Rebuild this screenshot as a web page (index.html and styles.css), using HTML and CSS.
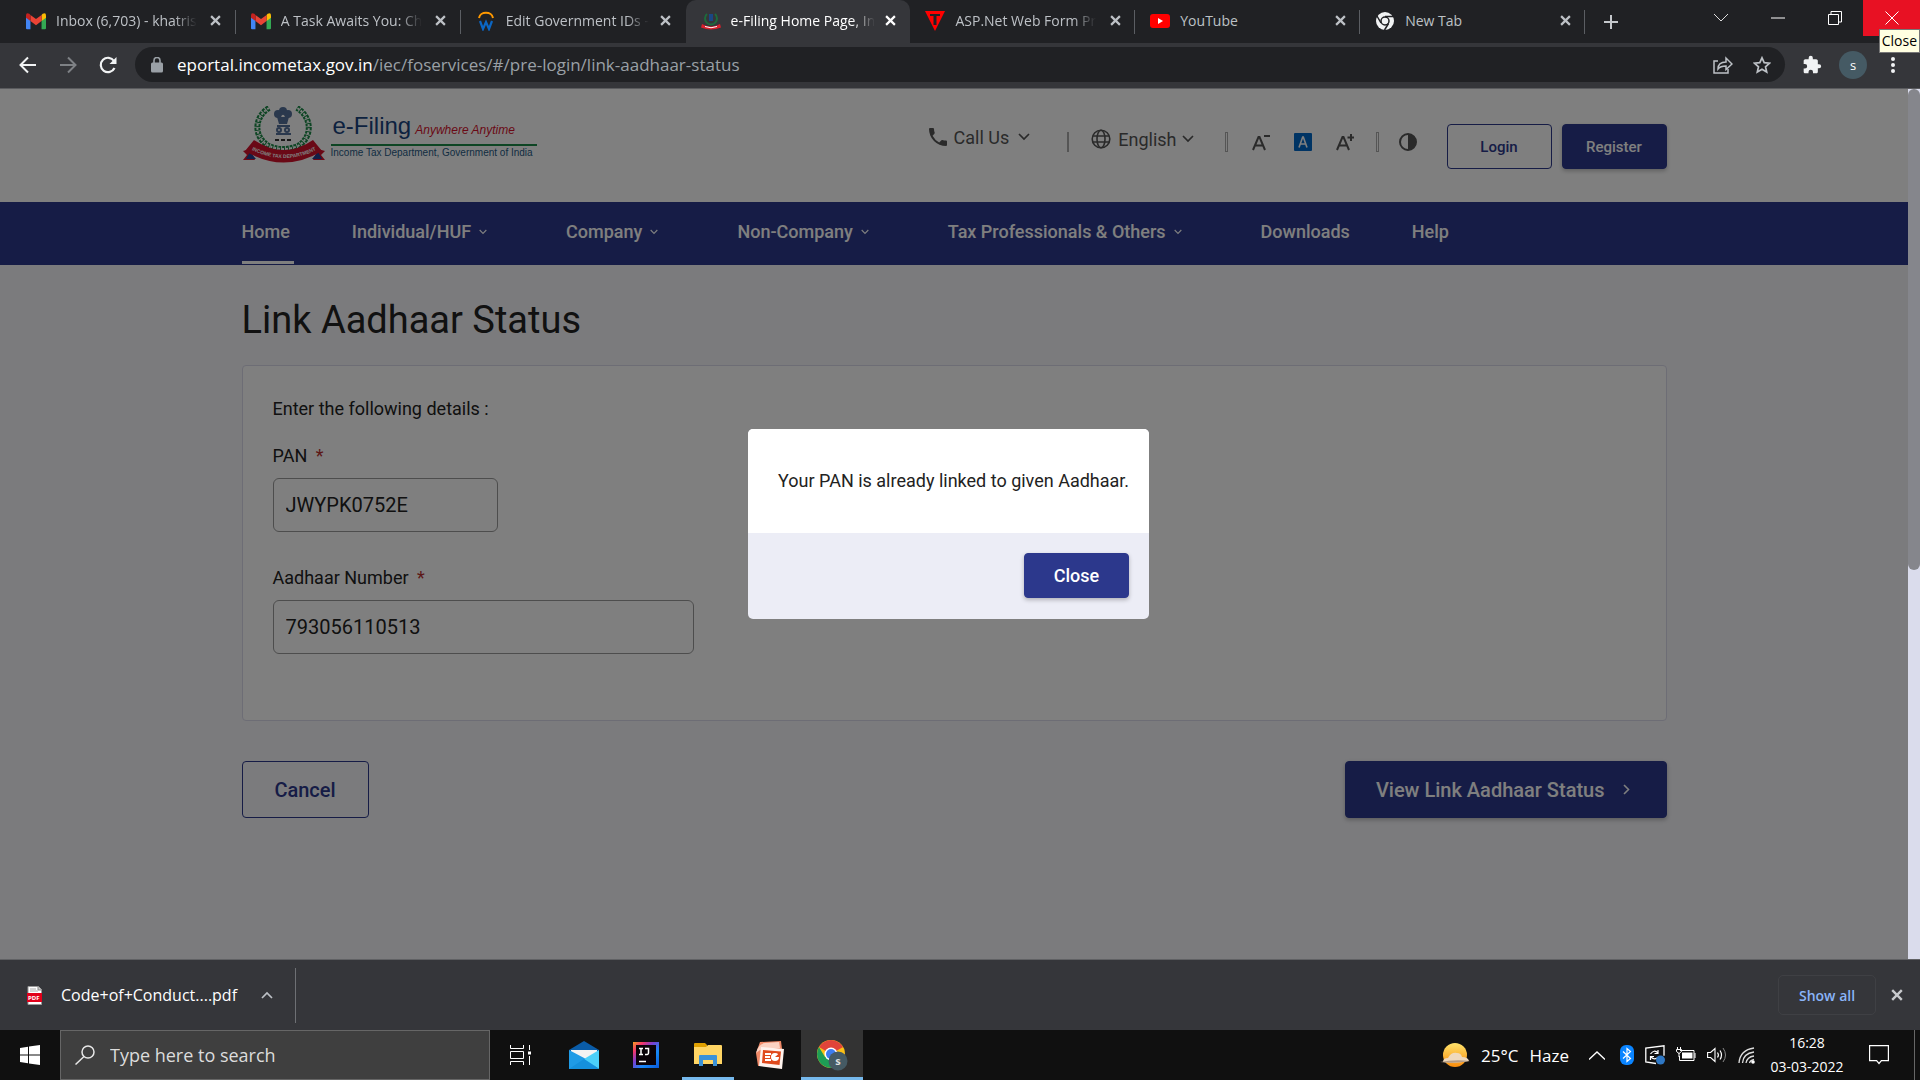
FILE: index.html
```html
<!DOCTYPE html>
<html lang="en">
<head>
<meta charset="utf-8">
<title>e-Filing Home Page, Income Tax Department</title>
<link rel="stylesheet" href="styles.css">
</head>
<body>
<svg class="defs" width="0" height="0" aria-hidden="true">
  <symbol id="x" viewBox="0 0 10 10"><path d="M1 1l8 8M9 1l-8 8" fill="none" stroke="currentColor" stroke-width="2"/></symbol>
  <symbol id="down" viewBox="0 0 12 8"><path d="M1 1l5 5 5-5" fill="none" stroke="currentColor" stroke-width="1.700"/></symbol>
  <symbol id="gmail" viewBox="0 0 18 18"><path d="M0 4v11.500q0 1 1 1h3V8.500z" fill="#4285f4"/><path d="M14 8.500v8h3q1 0 1-1V4z" fill="#34a853"/><path d="M14 3.500v5.500l4-3V4q0-3-3-1.500z" fill="#fbbc04"/><path d="M4 3.500L9 7.300l5-3.800V9l-5 3.800L4 9z" fill="#ea4335"/><path d="M0 4q0-3 3-1.500l1 1V9L0 6z" fill="#c5221f"/></symbol>
</svg>

<header class="browser">
  <div class="tabstrip">
    <div class="tabs">
      <div class="tab"><svg class="fav"><use href="#gmail"/></svg><span class="tab-title"><span>Inbox (6,703) - khatris</span></span><button class="tab-x" aria-label="Close tab"><svg><use href="#x"/></svg></button></div>
      <div class="tab"><svg class="fav"><use href="#gmail"/></svg><span class="tab-title"><span>A Task Awaits You: Ch</span></span><button class="tab-x" aria-label="Close tab"><svg><use href="#x"/></svg></button></div>
      <div class="tab no-line"><svg class="fav" viewBox="0 0 18 20"><path d="M2 7C3 0 15 0 16 7" fill="none" stroke="#f90" stroke-width="2"/><path d="M3 10l3 8 3-7 3 7 3-8" fill="none" stroke="#0b66c3" stroke-width="2.200"/></svg><span class="tab-title"><span>Edit Government IDs -</span></span><button class="tab-x" aria-label="Close tab"><svg><use href="#x"/></svg></button></div>
      <div class="tab active no-line"><svg class="fav" viewBox="0 0 20 18"><path d="M6 2a6 6 0 1 0 8 0" fill="none" stroke="#1d6b3c" stroke-width="2"/><path d="M10 2v7" stroke="#1a4784" stroke-width="4"/><path d="M1 12q9 5 18 0l1 3.500q-10 4-20 0z" fill="#d8202c"/><path d="M4 14.500q6 2.500 12 0" fill="none" stroke="#fff"/></svg><span class="tab-title"><span>e-Filing Home Page, In</span></span><button class="tab-x" aria-label="Close tab"><svg><use href="#x"/></svg></button></div>
      <div class="tab"><svg class="fav" viewBox="0 0 20 20"><path d="M0 0h20L10 20z" fill="#f00"/><path d="M5 3h10v2h-3.500v9h-3V5H5z" fill="#202124"/></svg><span class="tab-title"><span>ASP.Net Web Form Pr</span></span><button class="tab-x" aria-label="Close tab"><svg><use href="#x"/></svg></button></div>
      <div class="tab"><svg class="fav" viewBox="0 0 20 20"><rect y="3" width="20" height="14" rx="3" fill="#f00"/><path d="M8 7l5 3-5 3z" fill="#fff"/></svg><span class="tab-title">YouTube</span><button class="tab-x" aria-label="Close tab"><svg><use href="#x"/></svg></button></div>
      <div class="tab"><svg class="fav" viewBox="0 0 20 20"><circle cx="10" cy="10" r="9" fill="#f1f3f4"/><circle cx="10" cy="10" r="4" fill="#f1f3f4" stroke="#202124" stroke-width="1.500"/><path d="M10 5.500h8.500M6 12L2 5M13.500 12.500L9.500 19" stroke="#202124" stroke-width="1.500"/></svg><span class="tab-title">New Tab</span><button class="tab-x" aria-label="Close tab"><svg><use href="#x"/></svg></button></div>
    </div>
    <button class="new-tab" aria-label="New tab"><svg width="16" height="16" viewBox="0 0 16 16"><path d="M8 1v14M1 8h14" stroke="#c5c8cc" stroke-width="2"/></svg></button>
    <div class="win-controls">
      <button aria-label="Search tabs"><svg width="14" height="8" viewBox="0 0 14 8"><path d="M0 0l7 7 7-7" fill="none" stroke="#ddd"/></svg></button>
      <button aria-label="Minimize"><svg width="14" height="2"><path d="M0 1h14" stroke="#fff"/></svg></button>
      <button aria-label="Restore"><svg width="14" height="14" viewBox="0 0 14 14"><path d="M.5 3.500h10v10H.5zM3 3V.5h10.500V11H11" fill="none" stroke="#fff"/></svg></button>
      <button class="win-close" aria-label="Close window"><svg width="14" height="14" viewBox="0 0 14 14"><path d="M.5.5l13 13M13.500.5l-13 13" stroke="#fff"/></svg></button>
    </div>
    <div class="tooltip">Close</div>
  </div>
  <div class="toolbar">
    <button class="tool" aria-label="Back"><svg width="18" height="18" viewBox="0 0 18 18"><path d="M17 9H2M9 1.500L1.500 9 9 16.500" fill="none" stroke="#f1f3f4" stroke-width="2"/></svg></button>
    <button class="tool" aria-label="Forward"><svg width="18" height="18" viewBox="0 0 18 18"><path d="M1 9h15M9 1.500L16.500 9 9 16.500" fill="none" stroke="#7e8185" stroke-width="2"/></svg></button>
    <button class="tool" aria-label="Reload"><svg width="18" height="18" viewBox="0 0 18 18"><path d="M15.500 12A7.200 7.200 0 1 1 15 5" fill="none" stroke="#f1f3f4" stroke-width="2.200"/><path d="M17.500 1v7h-7z" fill="#f1f3f4"/></svg></button>
    <div class="omnibox">
      <svg width="12" height="16" viewBox="0 0 12 16"><rect y="5.500" width="12" height="10" rx="1.500" fill="#9aa0a6"/><path d="M3 6V3.500a3 3 0 0 1 6 0V6" fill="none" stroke="#9aa0a6" stroke-width="1.600"/></svg>
      <div class="url"><b>eportal.incometax.gov.in</b>/iec/foservices/#/pre-login/link-aadhaar-status</div>
      <svg width="20" height="18" viewBox="0 0 20 18"><path d="M5 5H1v12h14v-4" fill="none" stroke="#bdc1c6" stroke-width="1.500"/><path d="M5 13c0-5 3-7 8-7V2l6 6-6 5.500V10c-4 0-6 .5-8 3z" fill="none" stroke="#bdc1c6" stroke-width="1.500"/></svg>
      <svg class="star" width="18" height="18" viewBox="0 0 18 18"><path d="M9 1.800l2.200 4.900 5.300.5-4 3.600 1.200 5.300L9 13.300l-4.700 2.800 1.200-5.300-4-3.600 5.300-.5z" fill="none" stroke="#bdc1c6" stroke-width="1.700"/></svg>
    </div>
    <button class="tool ext" aria-label="Extensions"><svg width="20" height="20" viewBox="0 0 24 24"><path d="M20.500 11H19V7c0-1.100-.9-2-2-2h-4V3.500a2.500 2.500 0 0 0-5 0V5H4c-1.100 0-2 .9-2 2v3.800h1.500a2.700 2.700 0 0 1 0 5.400H2V20c0 1.100.9 2 2 2h3.800v-1.500a2.700 2.700 0 0 1 5.400 0V22H17c1.100 0 2-.9 2-2v-4h1.500a2.500 2.500 0 0 0 0-5z" fill="#f1f3f4"/></svg></button>
    <button class="avatar" aria-label="Profile">s</button>
    <button class="tool menu" aria-label="Menu"><svg width="4" height="18" viewBox="0 0 4 18"><g fill="#f1f3f4"><circle cx="2" cy="3" r="2"/><circle cx="2" cy="9" r="2"/><circle cx="2" cy="15" r="2"/></g></svg></button>
  </div>
</header>

<div class="viewport">
  <div class="page">
    <div class="site-header">
      <div class="wrap head-row">
        <a class="logo" href="#" aria-label="e-Filing, Income Tax Department">
          <svg class="emblem" width="84" height="58" viewBox="0 0 84 58">
            <path d="M27 2C12 11 11 31 27 40q14 6 29 0C71 31 70 11 55 2" fill="none" stroke="#1c8a48" stroke-width="6" stroke-dasharray="3 1"/>
            <path d="M27 2C12 11 11 31 27 40q14 6 29 0C71 31 70 11 55 2" fill="none" stroke="#fff" stroke-width="2" stroke-dasharray="2 2"/>
            <g fill="#55709a"><circle cx="41" cy="5" r="4"/><circle cx="36" cy="8" r="4"/><circle cx="46" cy="8" r="4"/><path d="M35 11h12l-2 7h-8z"/><rect x="35" y="19" width="13" height="2"/><path d="M34 27h15v2H34z"/></g>
            <g fill="none" stroke="#55709a" stroke-width="2"><circle cx="37" cy="24" r="2"/><circle cx="45" cy="24" r="2"/></g>
            <path d="M33 34h17" stroke="#333" stroke-width="2" stroke-dasharray="4 2"/>
            <path d="M8 43L1 45l4 4-4 5h12zM76 43l7 2-4 4 4 5H71z" fill="#d5122d"/><path d="M8 46l6 7-10 0zM76 46l-6 7 10 0z" fill="#243f8f"/>
            <path d="M12 34Q42 54 71 34l9 11Q42 68 3 45z" fill="#d5122d"/>
            <path id="arc" d="M8 43Q42 61 76 43" fill="none"/>
            <text class="arc-text"><textPath href="#arc" startOffset="50%">INCOME TAX DEPARTMENT</textPath></text>
          </svg>
          <span class="logo-text">
            <span class="logo-top"><span class="brand">e-Filing</span><i>Anywhere Anytime</i></span>
            <span class="logo-sub">Income Tax Department, Government of India</span>
          </span>
        </a>
        <div class="utils">
          <button class="util call"><svg width="18" height="18" viewBox="0 0 18 18"><path d="M0 1q0-1 1-1h3q1 0 1 1 0 2 .7 3.600.2.600-.3 1.100L3.600 7.800a15 15 0 0 0 6.600 6.600l2.200-2.200q.5-.4 1-.2 1.700.6 3.600.6 1 0 1 1V17q0 1-1 1A17 17 0 0 1 0 1z" fill="#555"/></svg>Call Us<svg class="chev" width="12" height="8"><use href="#down"/></svg></button>
          <span class="bar solid"></span>
          <button class="util lang"><svg width="20" height="20" viewBox="0 0 20 20"><g fill="none" stroke="#555" stroke-width="1.600"><circle cx="10" cy="10" r="8.800"/><ellipse cx="10" cy="10" rx="4" ry="8.800"/><path d="M2 7h16M2 13h16"/></g></svg>English<svg class="chev" width="12" height="8"><use href="#down"/></svg></button>
          <span class="bar"></span>
          <button class="util size" aria-label="Smaller text"><svg width="18" height="18" viewBox="0 0 18 18"><path d="M1 17L6.500 4h1L13 17M3 12.500h8" fill="none" stroke="#555" stroke-width="2"/><path d="M12 3h6" stroke="#555" stroke-width="2"/></svg></button>
          <button class="util size boxed" aria-label="Normal text"><svg width="18" height="18" viewBox="0 0 18 18"><rect width="18" height="18" rx="1" fill="#0069c8"/><path d="M5 14.500L8.700 4h.6L13 14.500M6 11h6" fill="none" stroke="#fff" stroke-width="1.600"/></svg></button>
          <button class="util size" aria-label="Larger text"><svg width="18" height="18" viewBox="0 0 18 18"><path d="M1 17L6.500 4h1L13 17M3 12.500h8" fill="none" stroke="#555" stroke-width="2"/><path d="M11.500 4.500h7M15 1v7" stroke="#555" stroke-width="2"/></svg></button>
          <span class="bar"></span>
          <button class="util contrast" aria-label="Contrast"><svg width="18" height="18" viewBox="0 0 18 18"><circle cx="9" cy="9" r="8" fill="none" stroke="#555" stroke-width="2"/><path d="M9 1a8 8 0 0 1 0 16z" fill="#555"/></svg></button>
        </div>
        <div class="auth"><button class="btn small outline">Login</button><button class="btn small">Register</button></div>
      </div>
    </div>
    <nav class="site-nav">
      <div class="wrap nav-row">
        <a class="current" href="#">Home</a>
        <a class="drop" href="#">Individual/HUF<svg><use href="#down"/></svg></a>
        <a class="drop" href="#">Company<svg><use href="#down"/></svg></a>
        <a class="drop" href="#">Non-Company<svg><use href="#down"/></svg></a>
        <a class="drop" href="#">Tax Professionals &amp; Others<svg><use href="#down"/></svg></a>
        <a href="#">Downloads</a>
        <a href="#">Help</a>
      </div>
    </nav>
    <main class="wrap">
      <h1>Link Aadhaar Status</h1>
      <form class="card">
        <p>Enter the following details :</p>
        <label for="pan">PAN <span>*</span></label>
        <input id="pan" class="short" type="text" value="JWYPK0752E">
        <label for="aadhaar">Aadhaar Number <span>*</span></label>
        <input id="aadhaar" type="text" value="793056110513">
      </form>
      <div class="actions">
        <button class="btn big outline">Cancel</button>
        <button class="btn big">View Link Aadhaar Status<svg width="7" height="11" viewBox="0 0 7 11"><path d="M1 1l4.500 4.500L1 10" fill="none" stroke="currentColor" stroke-width="1.600"/></svg></button>
      </div>
    </main>
    <div class="backdrop">
      <div class="dialog" role="dialog" aria-label="Link status">
        <p>Your PAN is already linked to given Aadhaar.</p>
        <div class="dialog-foot"><button class="btn close-btn">Close</button></div>
      </div>
    </div>
  </div>
  <div class="scrollbar"><div class="thumb"></div></div>
</div>

<div class="shelf">
  <button class="download"><svg width="15" height="19" viewBox="0 0 15 19"><path d="M1 .5h10l3.500 3.500v14.500H1z" fill="#fff" stroke="#999"/><path d="M3 3h6M3 5h8" stroke="#aaa"/><path d="M11 0v4h4" fill="#ccc" stroke="#888"/><rect y="7" width="15" height="9" fill="#e2001a"/><text x="1" y="14" class="pdf">PDF</text></svg><span>Code+of+Conduct....pdf</span><svg class="up" width="12" height="8"><use href="#down"/></svg></button>
  <div class="shelf-right"><button class="show-all">Show all</button><button class="shelf-x" aria-label="Close downloads bar"><svg width="12" height="12"><use href="#x"/></svg></button></div>
</div>

<footer class="taskbar">
  <button class="start" aria-label="Start"><svg width="20" height="20" viewBox="0 0 20 20"><path d="M0 3l8-1.200v7.700H0zM9 1.600L20 0v9.500H9zM0 10.500h8v7.700L0 17zM9 10.500h11V20L9 18.400z" fill="#fff"/></svg></button>
  <label class="search"><svg width="20" height="20" viewBox="0 0 20 20"><g fill="none" stroke="#e8e8e8" stroke-width="1.500"><circle cx="13" cy="7" r="6"/><path d="M9 11.500L.5 19.500"/></g></svg><input type="text" placeholder="Type here to search" aria-label="Search"></label>
  <button class="app" aria-label="Task View"><svg width="22" height="20" viewBox="0 0 22 20"><path d="M.5 0v3.500h13V0M.5 6.500h13v7H.5zM.5 20v-3.500h13V20M19.500 0v5M19.500 11v9" fill="none" stroke="#fff"/><rect x="18" y="6.500" width="3" height="3" fill="#fff"/></svg></button>
  <button class="app mail" aria-label="Mail"><svg width="30" height="28" viewBox="0 0 30 28"><path d="M0 9L15 0l15 9v4H0z" fill="#0a5ca8"/><path d="M2 9h26v10H2z" fill="#f3f3f3"/><path d="M0 9l17 9L30 28H0z" fill="#1f9be6"/><path d="M30 9L15 18l15 10z" fill="#4bd0f9"/><path d="M15 18l15 10H0z" fill="#1590dc"/></svg></button>
  <button class="app" aria-label="IntelliJ IDEA"><svg width="26" height="26" viewBox="0 0 26 26"><defs><linearGradient id="ij" x2="1" y2="1"><stop stop-color="#f8a020"/><stop offset=".2" stop-color="#f4366a"/><stop offset=".4" stop-color="#7a3fd0"/><stop offset=".65" stop-color="#1688f8"/><stop offset="1" stop-color="#0b58d8"/></linearGradient></defs><rect width="26" height="26" fill="url(#ij)"/><rect x="3" y="3" width="20" height="20" fill="#0a0208"/><path d="M6 19.500h7M6 6.500h4M8 6.500v6M6 12.500h4M12 6.500h3.500v4.500q0 2-3.500 1.500" fill="none" stroke="#fff" stroke-width="1.500"/></svg></button>
  <button class="app running" aria-label="File Explorer"><svg width="28" height="24" viewBox="0 0 28 24"><path d="M0 1q0-1 1-1h10l2 2v3H0z" fill="#e0a000"/><path d="M0 4h12l2-2h13q1 0 1 1v18H0z" fill="#ffd564"/><path d="M5 23V13q0-1 1-1h16q1 0 1 1v10h-4v-6H9v6z" fill="#3b92d8"/></svg></button>
  <button class="app" aria-label="PowerPoint"><svg width="28" height="28" viewBox="0 0 28 28"><path d="M4 1l21-1 1 8-3 16-21 1L0 12z" fill="#f08a68"/><path d="M0 12Q2 3 9 2l14-1 1 6-20 2z" fill="#fbd2c2"/><path d="M5 6l23 2-2 20-23-3z" fill="#fff3ee"/><path d="M7 9l18 1.500L23.500 24 6 22z" fill="#e0491c"/><path d="M9 13h6M9 16h5M9 19h6" stroke="#fff" stroke-width="1.800"/><circle cx="19" cy="16" r="4" fill="#fff"/><path d="M19 16h4.500v-4z" fill="#e0491c"/></svg></button>
  <button class="app running selected" aria-label="Google Chrome"><svg width="32" height="32" viewBox="0 0 32 32"><circle cx="15" cy="15" r="14" fill="#fbc116"/><path d="M15 15L2.900 8A14 14 0 0 1 27.100 8z" fill="#e0443a"/><path d="M2.900 8A14 14 0 0 0 15 29l6-10.500L9 18z" fill="#1e9e55"/><circle cx="15" cy="15" r="6.500" fill="#fff"/><circle cx="15" cy="15" r="5" fill="#3e7df0"/><circle cx="22" cy="22" r="9.500" fill="#455a64"/><text x="22" y="26" class="badge">s</text></svg></button>
  <div class="tray">
    <button class="weather"><svg width="30" height="24" viewBox="0 0 30 24"><defs><linearGradient id="sun" x2="0" y2="1"><stop stop-color="#ffe36b"/><stop offset="1" stop-color="#f98c0c"/></linearGradient></defs><circle cx="15" cy="12" r="12" fill="url(#sun)"/><path d="M3 19q0-4 5-4 3-6 9-5 4 0 5 4 6 0 7 4-13 3-26 1z" fill="#efd9bd"/><path d="M0 19q15-3 30-1-15 3-30 1z" fill="#b39b86"/></svg><span>25°C</span><span>Haze</span></button>
    <button class="hidden-icons" aria-label="Hidden icons"><svg width="16" height="9" viewBox="0 0 16 9"><path d="M0 8.500L8 1l8 7.500" fill="none" stroke="#fff" stroke-width="1.300"/></svg></button>
    <button aria-label="Bluetooth"><svg width="14" height="20" viewBox="0 0 14 20"><rect width="14" height="20" rx="6" fill="#0a84ff"/><path d="M3 6.500l7.500 7L7 16.500v-13l3.500 3L3 13.500" fill="none" stroke="#fff" stroke-width="1.200"/></svg></button>
    <button aria-label="Sync"><svg width="20" height="20" viewBox="0 0 20 20"><path d="M11 18.500L.8 17V3L19 .8v10" fill="none" stroke="#fff" stroke-width="1.300"/><path d="M5.500 9q3.500-5 7.500-1M13 5v3.500H9.500M12 13q-3 2-6-1M5.500 15v-3.500H9" fill="none" stroke="#fff" stroke-width="1.200"/><circle cx="15.500" cy="15" r="4.500" fill="#2e77c4"/></svg></button>
    <button aria-label="Battery"><svg width="20" height="16" viewBox="0 0 20 16"><path d="M4 3.500h14v10H3.500V9" fill="none" stroke="#fff"/><rect x="6" y="5.500" width="10.500" height="6" fill="#fff"/><path d="M18.500 6v5h1V6z" fill="#fff"/><path d="M1.500 0v2M4.500 0v2M.5 2.500h5v2L3 6.500.5 4.500zM3 6v4" fill="none" stroke="#fff"/></svg></button>
    <button aria-label="Volume"><svg width="20" height="16" viewBox="0 0 20 16"><path d="M.6 5.500h3L8 1.500v13l-4.400-4h-3z" fill="none" stroke="#fff" stroke-width="1.100"/><path d="M10.500 5.500q1.800 2.500 0 5M13 3.500q3 4.500 0 9" fill="none" stroke="#fff" stroke-width="1.200"/><path d="M16 1q5 7 0 14" fill="none" stroke="#888"/></svg></button>
    <button aria-label="Network"><svg width="18" height="17" viewBox="0 0 18 17"><g fill="none" stroke="#ddd" stroke-width="1.300"><path d="M1 16Q2 3 16 1"/><path d="M4.500 16Q5 6.500 16 5"/><path d="M8 16q1-6 8-7"/><path d="M11.500 16q.5-2.500 4.500-3.500"/></g><circle cx="15" cy="15" r="1.800" fill="#fff"/></svg></button>
    <button class="clock"><span>16:28</span><span>03-03-2022</span></button>
    <button class="notify" aria-label="Notifications"><svg width="20" height="20" viewBox="0 0 20 20"><path d="M.6.6h18.800v15h-7L10 18.500l-2.400-2.900h-7z" fill="none" stroke="#fff" stroke-width="1.200"/></svg></button>
  </div>
  <button class="desktop-peek" aria-label="Show desktop"></button>
</footer>
</body>
</html>
```
FILE: styles.css
```css
* { box-sizing: border-box; }

body {
  margin: 0;
  height: 100vh;
  display: flex;
  flex-direction: column;
  overflow: hidden;
  font-family: "Open Sans", "Noto Sans", sans-serif;
  color: #fff;
}

button {
  margin: 0;
  padding: 0;
  border: 0;
  background: none;
  color: inherit;
  font: inherit;
  display: flex;
  align-items: center;
  justify-content: center;
}

a { color: inherit; text-decoration: none; }
svg { flex: none; display: block; }
.defs { position: absolute; }

/* Browser frame */
.tabstrip {
  position: relative;
  display: flex;
  height: 43px;
  padding-left: 11px;
  background: #202124;
  font-size: 14px;
}
.tabs { display: flex; flex: 0 1 1574px; min-width: 0; }
.tab {
  position: relative;
  flex: 1 1 0;
  min-width: 0;
  display: flex;
  align-items: center;
  padding: 0 10px 2px 15px;
  color: #bdc1c6;
}
.tab::after {
  content: "";
  position: absolute;
  right: 0;
  top: 10px;
  width: 1px;
  height: 24px;
  background: #5b5e63;
}
.tab.no-line::after { display: none; }
.tab.active { background: #35363a; border-radius: 10px 10px 0 0; color: #fff; }
.fav { width: 20px; height: 20px; margin-right: 10px; }
.tab-title { flex: 1; min-width: 0; white-space: nowrap; }
.tab-title span { mask-image: linear-gradient(90deg, #000 84%, transparent); }
.tab-x { width: 20px; height: 20px; margin-left: 3px; }
.tab-x svg { width: 11px; height: 11px; }
.new-tab { width: 52px; }
.win-controls { display: flex; margin-left: auto; height: 36px; }
.win-controls button { width: 57px; }
.win-controls .win-close { width: 57px; background: #e81123; }
.tooltip {
  position: absolute;
  right: 0;
  top: 29px;
  z-index: 2;
  padding: 1px 2px;
  border: 1px solid #777;
  background: #ffffe1;
  color: #000;
  font-size: 14px;
  line-height: 20px;
}
.toolbar {
  display: flex;
  align-items: center;
  height: 46px;
  padding: 0 8px 2px 8px;
  background: #35363a;
  border-bottom: 1px solid #5a5b5e;
}
.tool { width: 40px; height: 36px; }
.omnibox {
  flex: 1;
  display: flex;
  align-items: center;
  height: 35px;
  margin: 0 8px 0 7px;
  padding: 0 14px 0 16px;
  border-radius: 18px;
  background: #202124;
}
.url { flex: 1; padding-left: 14px; font-size: 17px; color: #9aa0a6; }
.url b { font-weight: 400; color: #fff; }
.star { margin-left: 20px; }
.avatar { width: 28px; height: 28px; margin: 0 6px 0 8px; border-radius: 50%; background: #455a64; font-size: 13px; }
.ext { width: 38px; }
.tool.menu { width: 39px; }

/* Web page */
.viewport {
  flex: 1;
  min-height: 0;
  display: flex;
  font-family: Roboto, "Open Sans", sans-serif;
}
.page {
  position: relative;
  flex: 1;
  background: #f6f6fa;
  color: #222;
  overflow: hidden;
}
.wrap { max-width: 1425px; margin: 0 auto; }
.site-header { background: #fff; }
.head-row { display: flex; height: 113px; align-items: flex-start; }
.logo { display: flex; padding-top: 17px; }
.logo-text { display: flex; flex-direction: column; width: 206px; margin-left: 5px; padding-top: 6px; font-family: "Liberation Sans Narrow", "Liberation Sans", sans-serif; }
.logo-top { display: flex; align-items: baseline; gap: 4px; border-bottom: 2px solid #1c8a48; padding-left: 2px; line-height: 28px; color: #1a4480; }
.brand { font-family: "Liberation Sans", sans-serif; font-size: 24px; }
.logo-top i { font-size: 12px; color: #d5122d; white-space: nowrap; }
.logo-sub { color: #1f5a84; font-size: 10px; line-height: 14px; white-space: nowrap; }
.arc-text { font: bold 5px "Liberation Sans", sans-serif; fill: #fff; text-anchor: middle; }

.utils { display: flex; align-items: center; margin-left: auto; padding-top: 38px; height: 68px; color: #555; font-size: 18px; }
.util.call { padding-bottom: 10px; }
.util.lang { padding-bottom: 6px; }
.util.call svg:first-child, .util.lang svg:first-child { margin-right: 7px; }
.chev { margin-left: 9px; }
.util.lang .chev { margin-left: 5px; }
.bar { width: 3px; height: 20px; margin: 0 31px; border: 1px solid #aaa; }
.bar.solid { width: 1px; margin: 0 22px 0 37px; }
.util.size + .util.size { margin-left: 24px; }
.util.lang + .bar { margin-right: 24px; }
.util.size + .bar { margin: 0 20px 0 22px; }
.auth { display: flex; gap: 10px; margin-left: 30px; padding-top: 35px; }

.btn {
  border: 1px solid #2c388c;
  border-radius: 4px;
  background: #2c388c;
  color: #fff;
  font-weight: 500;
  box-shadow: 0 2px 4px rgba(0, 0, 0, .25);
}
.btn.outline { background: transparent; color: #2c388c; box-shadow: none; }
.btn.small { width: 105px; height: 45px; font-size: 15px; }
.btn.big { min-width: 127px; height: 57px; padding: 0 30px; font-size: 20px; }
.btn.big svg { margin: 0 6px 0 18px; }

.site-nav { background: #2c388c; color: #fff; }
.nav-row { display: flex; gap: 58px; font-size: 18px; font-weight: 500; line-height: 56px; }
.nav-row a { display: flex; align-items: center; height: 62px; margin-bottom: 1px; padding: 0 4px 3px 0; white-space: nowrap; }
.nav-row .current { border-bottom: 3px solid #fff; padding-bottom: 0; }
.drop svg { width: 8px; height: 6px; margin: 0 17px 0 8px; }

h1 { margin: 0; padding: 32px 0 22px; font-size: 38px; line-height: 46px; font-weight: 400; }
.card {
  display: flex;
  flex-direction: column;
  align-items: flex-start;
  padding: 30px 30px 66px;
  border: 1px solid #dadaea;
  border-radius: 4px;
  background: #fff;
  font-size: 18px;
  line-height: 26px;
}
.card p { margin: 0 0 21px; }
.card label { margin-bottom: 9px; white-space: pre; }
.card label span { color: #b8312f; padding-left: 4px; }
.card input {
  width: 421px;
  height: 54px;
  padding: 0 12px;
  border: 1px solid #9a9a9a;
  border-radius: 6px;
  background: transparent;
  color: #222;
  font: 20px Roboto, sans-serif;
}
.card input.short { width: 225px; margin-bottom: 33px; }
.actions { display: flex; justify-content: space-between; padding-top: 40px; }

.backdrop {
  position: absolute;
  inset: 0;
  display: flex;
  align-items: center;
  justify-content: center;
  padding-right: 11px;
  background: rgba(0, 0, 0, .5);
}
.dialog { width: 401px; border-radius: 5px; overflow: hidden; background: #ecedf6; }
.dialog p { margin: 0; padding: 39px 20px 39px 30px; background: #fff; font-size: 18px; line-height: 26px; white-space: nowrap; }
.dialog-foot { display: flex; justify-content: flex-end; padding: 20px 20px 21px; }
.close-btn { width: 105px; height: 45px; font-size: 18px; }

.scrollbar { width: 12px; background: #dadcec; }
.thumb { height: 481px; border-radius: 6px; background: #85868c; }

/* Downloads shelf */
.shelf {
  display: flex;
  align-items: center;
  justify-content: space-between;
  height: 71px;
  border-top: 1px solid #606164;
  background: #35363a;
}
.download { height: 55px; padding: 0 22px 0 27px; border-right: 1px solid #6e7074; font-size: 16px; }
.download span { margin: 0 24px 0 19px; }
.up { transform: rotate(180deg); color: #bdc1c6; }
.pdf { font: bold 6px "Open Sans", sans-serif; fill: #fff; }
.shelf-right { display: flex; align-items: center; padding-right: 17px; gap: 15px; }
.show-all { width: 98px; height: 40px; border: 1px solid #3f4044; border-radius: 5px; color: #8ab4f8; font-size: 14px; font-weight: 600; }
.shelf-x { color: #c8cacd; }

/* Taskbar */
.taskbar { display: flex; height: 50px; background: #101010; }
.start { width: 60px; }
.search { display: flex; align-items: center; width: 430px; padding-left: 14px; border: 1px solid #666; background: #3f3f3f; }
.search input { flex: 1; min-width: 0; margin-left: 15px; padding: 0; border: 0; outline: 0; background: none; font: 18px "Open Sans", sans-serif; }
.search input::placeholder { color: #dcdcdc; opacity: 1; }
.app { width: 62px; position: relative; }
.mail { width: 63px; }
.running::after { content: ""; position: absolute; left: 5px; right: 5px; bottom: 0; height: 3px; background: #76b9ed; }
.selected { background: #333; }
.selected::after { left: 0; right: 0; }
.badge { font: bold 11px "Open Sans", sans-serif; fill: #ddd; text-anchor: middle; }
.tray { display: flex; align-items: center; gap: 11px; margin-left: auto; padding-right: 25px; }
.weather { font-size: 17px; gap: 11px; margin-right: 9px; }
.hidden-icons { margin-right: 4px; }
.clock { flex-direction: column; width: 78px; margin-left: 1px; font-size: 14px; line-height: 24px; }
.notify { margin-left: 12px; }
.desktop-peek { width: 6px; border-left: 1px solid #666; }
```
